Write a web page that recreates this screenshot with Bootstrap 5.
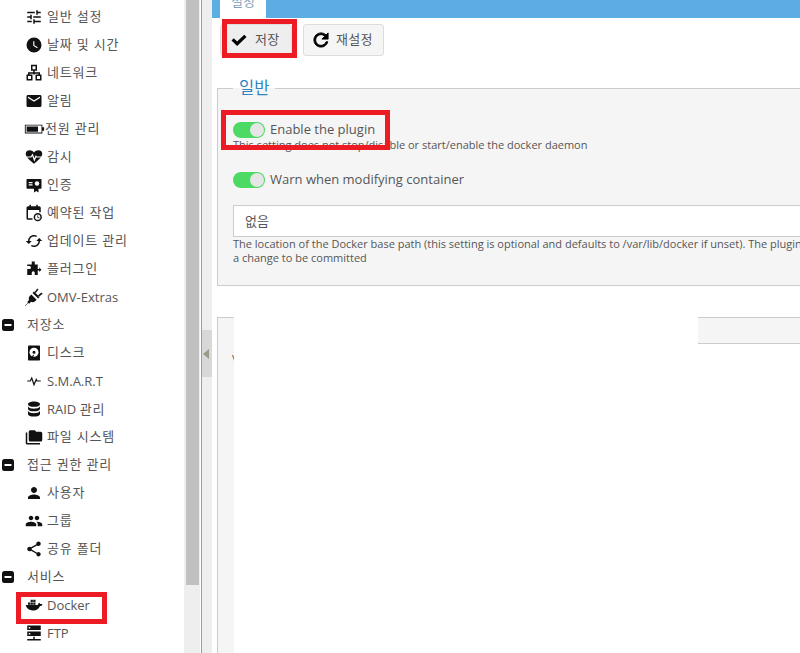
<!DOCTYPE html>
<html lang="ko"><head><meta charset="utf-8"><title>Docker</title>
<link rel="stylesheet" href="https://cdn.jsdelivr.net/npm/bootstrap@5.3.0/dist/css/bootstrap.min.css">
<style>
html,body{height:653px;overflow:hidden;background:#fff}
body{font-family:"Open Sans","Noto Sans CJK KR",sans-serif;font-size:13px;color:#555}
.shell{height:653px;width:800px}
.side{width:184px;padding-top:3px;flex:none;overflow:hidden}
.tree-row{height:28px;padding-left:25px;color:#555}
.tree-row svg{width:18px;height:18px;flex:none;margin-right:4px;fill:#111}
.tree-head{padding-left:2px}
.tree-head svg{width:12px;height:12px;margin-right:13px}
.tree-row span{white-space:nowrap;padding-top:1px}
.tree-row .ko{letter-spacing:.8px;padding-top:0}
.track{width:16px;background:#eee;flex:none;padding-left:2px}
.thumb{width:13px;height:585px;background:#c0c0c0}
.gutter{width:1px;margin-left:1px;background:#5dade2;flex:none}
.splitter{width:10px;background:#eee;flex:none}
.split-grip{height:47px;width:10px;background:#d8d8d8;margin-top:330px}
.split-arrow{width:0;height:0;border-style:solid;border-width:5px 6px 5px 0;border-color:transparent #9a9a86 transparent transparent;margin-left:1px}
.pane{width:588px;flex:none;overflow:hidden;position:relative}
.tabband{height:18px;background:#5dade2;padding-left:8px;overflow:hidden}
.tabitem{width:46px;height:18px;background:#fff;text-align:center;color:#7f9fb5;line-height:14px}
.tabitem span{display:block;margin-top:-6px}
.toolbar{padding:6px 0 0 8px;gap:11px}
.tool-btn{height:32px;font-size:13px;color:#555;border:1px solid #ddd;background:#f5f5f5;border-radius:3px;padding:0 0 0 9px;gap:7px;white-space:nowrap;letter-spacing:.3px}
.tool-btn:hover{color:#555;background:#eee;border-color:#ddd}
.tool-btn svg{width:18px;height:18px;fill:#000;flex:none}
.tool-save{width:72px;background:#eee}
.tool-reset{width:81px}
.tool-reset svg{width:16px;height:16px}
.group-box{width:720px;margin:20px 0 0 5px;border:1px solid #ccc;background:#f5f5f5;padding:0 0 0 15px;height:210px;min-width:0;display:block}
.group-box legend{float:none;width:auto;font-size:16.5px;line-height:24px;color:#2e86c1;padding:0 6px;margin:0;font-weight:400}
.switch-row{height:16px;gap:5px;font-size:13px;white-space:nowrap}
.sw{width:32px;height:16px;border-radius:8px;background:#4cd964;position:relative;flex:none}
.sw::after{content:"";position:absolute;right:1px;top:1px;width:14px;height:14px;border-radius:50%;background:#e6e6e6}
.hint{font-size:11px;line-height:14px;color:#555;white-space:nowrap}
.first{margin-top:22px}
.second{margin-top:20px}
.path-input{height:32px;width:660px;margin-top:17px;border:1px solid #ccc;border-radius:0;font-size:13px;color:#555;padding:0 11px 2px;background:#fff}
.path-input:focus{box-shadow:none;border-color:#ccc;color:#555}
.lower{margin:31px 0 0 5px}
.low-left{width:17px;height:340px;border:1px solid #ccc;border-width:1px 0 0 1px;background:#f5f5f5;overflow:hidden}
.low-left span{display:block;margin:32px 0 0 14px;font-size:11px;line-height:14px}
.low-blank{width:464px;background:#fff;flex:none}
.low-right{height:27px;flex:1;border:1px solid #ccc;border-width:1px 0;background:#f5f5f5}
.mark-box{position:absolute;border:5px solid #ed1c24;pointer-events:none}
</style></head><body>
<div class="shell d-flex">
<nav class="side">
<div class="tree-row d-flex align-items-center"><svg viewBox="0 0 24 24"><path d="M3 17v2h6v-2H3zM3 5v2h10V5H3zm10 16v-2h8v-2h-8v-2h-2v6h2zM7 9v2H3v2h4v2h2V9H7zm14 4v-2H11v2h10zm-6-4h2V7h4V5h-4V3h-2v6z"/></svg><span class="ko">일반 설정</span></div>
<div class="tree-row d-flex align-items-center"><svg viewBox="0 0 24 24"><path d="M12 2a10 10 0 1 0 0 20 10 10 0 0 0 0-20zm4.200 14.200L11 13V7h1.500v5.200l4.500 2.700-.8 1.300z"/></svg><span class="ko">날짜 및 시간</span></div>
<div class="tree-row d-flex align-items-center"><svg viewBox="0 0 24 24"><path fill-rule="evenodd" d="M8 1h8v8h-3v2h7v3h2v8h-8v-8h4v-1h-5v1h-2v-1H6v1h4v8H2v-8h2v-3h7V9H8zm2 2v4h4V3zM4 16v4h4v-4zm12 0v4h4v-4z"/></svg><span class="ko">네트워크</span></div>
<div class="tree-row d-flex align-items-center"><svg viewBox="0 0 24 24"><path d="M20 4H4c-1.100 0-2 .9-2 2v12c0 1.100.9 2 2 2h16c1.100 0 2-.9 2-2V6c0-1.100-.9-2-2-2zm0 4l-8 5-8-5V6l8 5 8-5v2z"/></svg><span class="ko">알림</span></div>
<div class="tree-row d-flex align-items-center"><svg viewBox="0 0 24 12" style="margin-right:0;margin-left:-1px;width:21px"><path d="M1 1h20v3h2v4h-2v3H1zm1 1v8h18V2zm1 1h13v6H3z" fill-rule="evenodd"/></svg><span class="ko">전원 관리</span></div>
<div class="tree-row d-flex align-items-center"><svg viewBox="0 0 24 24"><path d="M12 21C5 15 1 11.500 1 7.500 1 4.500 3.500 3 6 3c2.500 0 4.500 1.200 6 3 1.500-1.800 3.500-3 6-3 2.500 0 5 1.500 5 4.500 0 4-4 7.500-11 13.500z"/><path d="M2 12h6l2-3 2.500 7 2-5 1 1h7" fill="none" stroke="#fff" stroke-width="1.600"/></svg><span class="ko">감시</span></div>
<div class="tree-row d-flex align-items-center"><svg viewBox="0 0 24 24"><path d="M3 4h18a1 1 0 0 1 1 1v11a1 1 0 0 1-1 1h-3v5l-3-2-3 2v-5H3a1 1 0 0 1-1-1V5a1 1 0 0 1 1-1z"/><path d="M5 8h5v1.500H5zm0 3h5v1.500H5z" fill="#fff"/><circle cx="16" cy="10" r="3" fill="#fff"/></svg><span class="ko">인증</span></div>
<div class="tree-row d-flex align-items-center"><svg viewBox="0 0 24 24"><path d="M6 1h2v2h7V1h2v2h2a2 2 0 0 1 2 2v6h-2V8H4v11h6v2H4a2 2 0 0 1-2-2V5a2 2 0 0 1 2-2h2z"/><path d="M17 12a5.500 5.500 0 1 0 0 11 5.500 5.500 0 0 0 0-11zm0 2a3.500 3.500 0 1 1 0 7 3.500 3.500 0 0 1 0-7zm-.5 1v3l2.500 1.200.5-.9-2-1V15z"/></svg><span class="ko">예약된 작업</span></div>
<div class="tree-row d-flex align-items-center"><svg viewBox="0 0 24 24"><path d="M12 4V1L8 5l4 4V6c3.300 0 6 2.700 6 6 0 1-.2 2-.7 2.800l1.500 1.500C19.500 15 20 13.600 20 12c0-4.400-3.600-8-8-8zm0 14c-3.300 0-6-2.700-6-6 0-1 .2-2 .7-2.800L5.200 7.700C4.500 9 4 10.400 4 12c0 4.400 3.600 8 8 8v3l4-4-4-4v3z" transform="rotate(90 12 12)"/></svg><span class="ko">업데이트 관리</span></div>
<div class="tree-row d-flex align-items-center"><svg viewBox="0 0 24 24"><path d="M9 2h4v4h4v6h2v-2l3 3-3 3v-2h-2v6h-4v-3a2 2 0 0 0-4 0v3H3v-8h3a2 2 0 0 0 0-4H3V6h6z"/></svg><span class="ko">플러그인</span></div>
<div class="tree-row d-flex align-items-center"><svg viewBox="0 0 24 24"><path d="M0 23.500l4-4-1-1 2.500-2.500c-1-1.800-.6-4 .9-5.500L8.500 8.500l7 7-2 2c-1.500 1.500-3.700 1.900-5.500.9L5.500 21l-1-1-4 4z"/><path d="M10 6.500l7.500 7.500 2-2L12 4.500zM12.500 5.500l4-5 1.500 1.500-4 5zM17 10l5-4 1.500 1.500-5 4z"/></svg><span>OMV-Extras</span></div>
<div class="tree-row tree-head d-flex align-items-center"><svg viewBox="0 0 12 12"><rect width="12" height="12" rx="2.500"/><rect x="2.500" y="5" width="7" height="2" fill="#fff"/></svg><span class="ko">저장소</span></div>
<div class="tree-row d-flex align-items-center"><svg viewBox="0 0 24 24"><path d="M5 2h14a1 1 0 0 1 1 1v18a1 1 0 0 1-1 1H5a1 1 0 0 1-1-1V3a1 1 0 0 1 1-1z"/><circle cx="12" cy="11" r="6" fill="#fff"/><path d="M12 9a2 2 0 1 1 0 4 2 2 0 0 1 0-4zM8 19l3-5 1 1-3 5z"/></svg><span class="ko">디스크</span></div>
<div class="tree-row d-flex align-items-center"><svg viewBox="0 0 24 24"><path d="M3 12h4l2-4 3 9 3-7 1 2h5" fill="none" stroke="#111" stroke-width="1.600"/></svg><span>S.M.A.R.T</span></div>
<div class="tree-row d-flex align-items-center"><svg viewBox="0 0 24 24"><path d="M12 2c4.400 0 8 1.500 8 3.500S16.400 9 12 9 4 7.500 4 5.500 7.600 2 12 2zM4 8c0 2 3.600 3.500 8 3.500S20 10 20 8v3.500c0 2-3.600 3.500-8 3.500s-8-1.500-8-3.500zm0 6c0 2 3.600 3.500 8 3.500s8-1.500 8-3.500v4.500c0 2-3.600 3.500-8 3.500s-8-1.500-8-3.500z"/></svg><span>RAID <span class="ko">관리</span></span></div>
<div class="tree-row d-flex align-items-center"><svg viewBox="0 0 24 24"><path d="M1 6h2v14h17v2H3a2 2 0 0 1-2-2z"/><path d="M7 3h6l2 2h6a2 2 0 0 1 2 2v9a2 2 0 0 1-2 2H7a2 2 0 0 1-2-2V5a2 2 0 0 1 2-2z"/></svg><span class="ko">파일 시스템</span></div>
<div class="tree-row tree-head d-flex align-items-center"><svg viewBox="0 0 12 12"><rect width="12" height="12" rx="2.500"/><rect x="2.500" y="5" width="7" height="2" fill="#fff"/></svg><span class="ko">접근 권한 관리</span></div>
<div class="tree-row d-flex align-items-center"><svg viewBox="0 0 24 24"><path d="M12 12c2.210 0 4-1.790 4-4s-1.790-4-4-4-4 1.790-4 4 1.790 4 4 4zm0 2c-2.670 0-8 1.340-8 4v2h16v-2c0-2.660-5.330-4-8-4z"/></svg><span class="ko">사용자</span></div>
<div class="tree-row d-flex align-items-center"><svg viewBox="0 0 24 24"><path d="M16 11c1.660 0 2.990-1.340 2.990-3S17.660 5 16 5c-1.660 0-3 1.340-3 3s1.340 3 3 3zm-8 0c1.660 0 2.990-1.340 2.990-3S9.660 5 8 5C6.340 5 5 6.340 5 8s1.340 3 3 3zm0 2c-2.330 0-7 1.170-7 3.500V19h14v-2.500c0-2.330-4.670-3.500-7-3.500zm8 0c-.29 0-.62.02-.97.05 1.160.84 1.970 1.970 1.970 3.450V19h6v-2.500c0-2.330-4.670-3.500-7-3.500z"/></svg><span class="ko">그룹</span></div>
<div class="tree-row d-flex align-items-center"><svg viewBox="0 0 24 24"><path d="M18 16.080c-.76 0-1.440.3-1.960.77L8.910 12.700c.05-.23.09-.46.09-.7s-.04-.47-.09-.7l7.050-4.110c.54.5 1.250.81 2.040.81 1.660 0 3-1.340 3-3s-1.340-3-3-3-3 1.340-3 3c0 .24.04.47.09.7L8.040 9.810C7.500 9.310 6.790 9 6 9c-1.660 0-3 1.340-3 3s1.340 3 3 3c.79 0 1.500-.31 2.040-.81l7.120 4.160c-.05.21-.08.43-.08.65 0 1.610 1.310 2.920 2.920 2.920 1.610 0 2.920-1.310 2.920-2.920s-1.310-2.920-2.920-2.920z"/></svg><span class="ko">공유 폴더</span></div>
<div class="tree-row tree-head d-flex align-items-center"><svg viewBox="0 0 12 12"><rect width="12" height="12" rx="2.500"/><rect x="2.500" y="5" width="7" height="2" fill="#fff"/></svg><span class="ko">서비스</span></div>
<div class="tree-row d-flex align-items-center"><svg viewBox="0 0 24 24"><path d="M1 12h16c.3-1.500 1-2.500 2-3 .7.500 1.200 1.200 1.300 2 1-.3 2-.2 3 .3-.6 1.400-1.700 2-3.300 2-1.300 3.700-4.500 6-8.500 6-5.500 0-9.800-2.500-10.500-7.300z"/><path d="M4 8.500h3v3H4zm3.500 0h3v3h-3zm3.500 0h3v3h-3zM7.500 5h3v3h-3zM11 5h3v3h-3z"/></svg><span>Docker</span></div>
<div class="tree-row d-flex align-items-center"><svg viewBox="0 0 24 24"><path d="M3 2h18v6H3zm0 8h18v6H3zm8 7h2v3h8v2H3v-2h8z"/><path d="M5 4h2v2H5zm0 8h2v2H5z" fill="#fff"/></svg><span>FTP</span></div>
</nav>
<div class="track"><div class="thumb"></div></div>
<div class="gutter"></div>
<div class="splitter"><div class="split-grip d-flex align-items-center"><div class="split-arrow"></div></div></div>
<main class="pane">
<div class="tabband d-flex"><div class="tabitem"><span>설정</span></div></div>
<div class="toolbar d-flex">
<a class="btn tool-btn tool-save d-flex align-items-center" href="#"><svg viewBox="0 0 24 24"><path d="M9.500 20L2 12.500l3-3 4.500 4.500L19 5l3 3z"/></svg>저장</a>
<a class="btn tool-btn tool-reset d-flex align-items-center" href="#"><svg viewBox="3 3 18 18"><path d="M17.650 6.350C16.200 4.900 14.210 4 12 4c-4.420 0-7.990 3.580-7.990 8s3.570 8 7.990 8c3.730 0 6.840-2.550 7.730-6h-2.080c-.82 2.330-3.040 4-5.650 4-3.310 0-6-2.690-6-6s2.690-6 6-6c1.660 0 3.140.69 4.220 1.780L13 11h7V4l-2.350 2.350z" stroke="#000" stroke-width="1"/></svg>재설정</a>
</div>
<fieldset class="group-box">
<legend>일반</legend>
<div class="switch-row first d-flex align-items-center"><span class="sw"></span>Enable the plugin</div>
<div class="hint">This setting does not stop/disable or start/enable the docker daemon</div>
<div class="switch-row second d-flex align-items-center"><span class="sw"></span>Warn when modifying container</div>
<input class="form-control path-input" type="text" value="없음">
<div class="hint">The location of the Docker base path (this setting is optional and defaults to /var/lib/docker if unset). The plugin<br>a change to be committed</div>
</fieldset>
<div class="lower d-flex">
<div class="low-left"><span>v</span></div>
<div class="low-blank"></div>
<div class="low-right"></div>
</div>
</main>
</div>
<div class="mark-box" style="left:222px;top:19px;width:75px;height:39px"></div>
<div class="mark-box" style="left:221px;top:110px;width:169px;height:40px"></div>
<div class="mark-box" style="left:16px;top:592px;width:91px;height:32px"></div>
<script src="https://cdn.jsdelivr.net/npm/bootstrap@5.3.0/dist/js/bootstrap.bundle.min.js"></script>
</body></html>
